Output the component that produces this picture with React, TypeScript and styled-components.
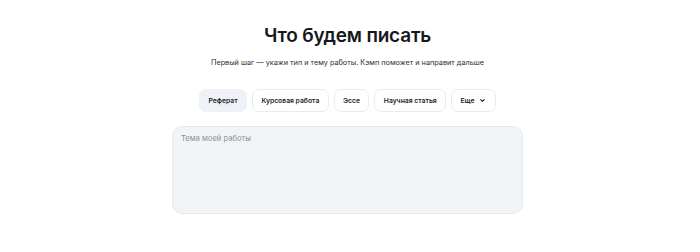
import { useState } from "react";
import styled, { createGlobalStyle } from "styled-components";

const GlobalStyle = createGlobalStyle`
  html, body {
    margin: 0;
    padding: 0;
    background: #ffffff;
  }
  body {
    font-family: Inter, "Noto Sans", sans-serif;
    color: #1b1d21;
  }
`;

const Page = styled.div`
  display: flex;
  flex-direction: column;
  align-items: center;
  padding: 24px 5px 0 0;
`;

const Title = styled.h1`
  margin: 0;
  font-size: 19px;
  font-weight: 600;
  letter-spacing: -0.2px;
  line-height: 24px;
  color: #17181b;
`;

const Subtitle = styled.p`
  margin: 9px 0 0;
  font-size: 7.3px;
  line-height: 12px;
  color: #2b2d31;
`;

const TypeRow = styled.div`
  display: flex;
  gap: 5px;
  margin-top: 20px;
`;

const TypeButton = styled.button<{ active?: boolean }>`
  display: flex;
  align-items: center;
  gap: 5px;
  height: 23px;
  padding: 0 8.4px;
  border-radius: 7px;
  border: 1px solid ${({ active }) => (active ? "#eef2f6" : "#e8ecf0")};
  background: ${({ active }) => (active ? "#eef2f6" : "#ffffff")};
  font-family: inherit;
  font-size: 6.8px;
  font-weight: 600;
  color: #1d1f23;
  cursor: pointer;
`;

const Chevron = styled.svg`
  width: 7px;
  height: 7px;
`;

const TopicBox = styled.textarea`
  box-sizing: border-box;
  width: 351px;
  height: 88px;
  margin-top: 14px;
  padding: 7px 8px;
  border: 1px solid #e6eaef;
  border-radius: 10px;
  background: #f0f4f7;
  resize: none;
  outline: none;
  font-family: inherit;
  font-size: 7.6px;
  color: #1d1f23;

  &::placeholder {
    color: #8b9096;
  }
`;

const types = ["Реферат", "Курсовая работа", "Эссе", "Научная статья"];

const App = () => {
  const [selected, setSelected] = useState("Реферат");

  return (
    <>
      <GlobalStyle />
      <Page>
        <Title>Что будем писать</Title>
        <Subtitle>Первый шаг — укажи тип и тему работы. Кэмп поможет и направит дальше</Subtitle>
        <TypeRow>
          {types.map((t) => (
            <TypeButton key={t} active={selected === t} onClick={() => setSelected(t)}>
              {t}
            </TypeButton>
          ))}
          <TypeButton>
            Еще
            <Chevron viewBox="0 0 10 10" fill="none" stroke="#1d1f23" strokeWidth="1.5" strokeLinecap="round" strokeLinejoin="round">
              <path d="M2.5 3.8 5 6.3 7.5 3.8" />
            </Chevron>
          </TypeButton>
        </TypeRow>
        <TopicBox placeholder="Тема моей работы" />
      </Page>
    </>
  );
};

export default App;
